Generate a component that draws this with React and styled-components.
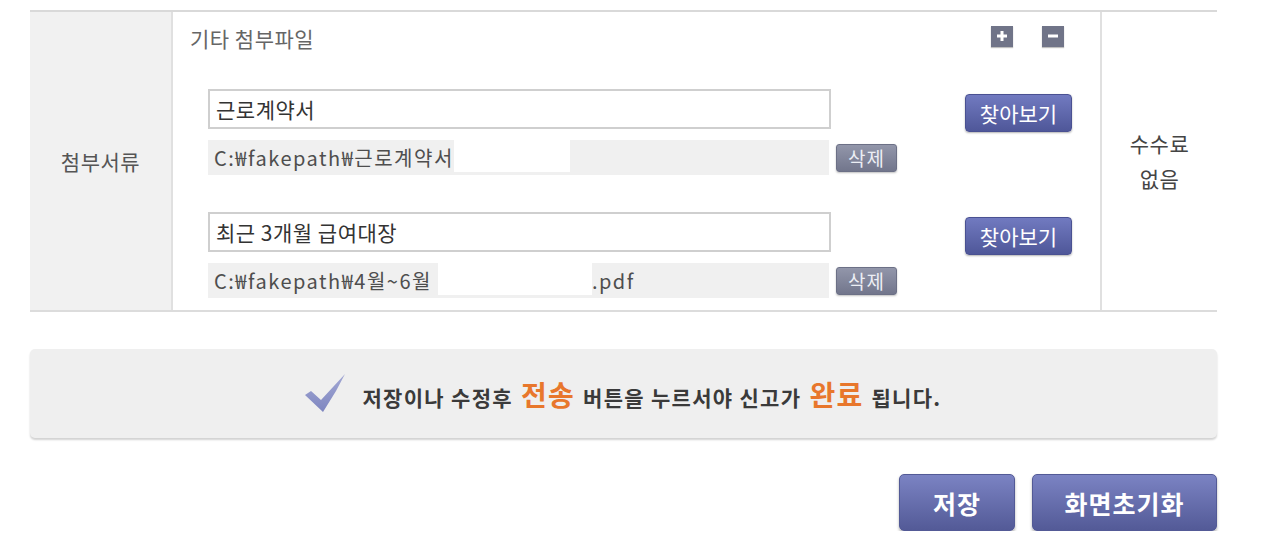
import React from "react";
import styled, { createGlobalStyle } from "styled-components";

const GlobalStyle = createGlobalStyle`
  body {
    margin: 0;
    background: #fff;
    font-family: "Noto Sans CJK KR", "Noto Sans", sans-serif;
    color: #444;
  }
`;

const Page = styled.div`
  width: 1187px;
  margin: 10px 0 0 30px;
`;

const Table = styled.div`
  display: grid;
  grid-template-columns: 143px 1fr 117px;
  border-top: 2px solid #d9d9d9;
  border-bottom: 2px solid #dcdcdc;
`;

const LabelCell = styled.div`
  display: flex;
  align-items: center;
  justify-content: center;
  background: #f1f1f1;
  border-right: 2px solid #e0e0e0;
  font-size: 21px;
  letter-spacing: 0.5px;
  color: #555;
`;

const BodyCell = styled.div`
  padding: 0 28px 12px 35px;
`;

const FeeCell = styled.div`
  display: flex;
  flex-direction: column;
  align-items: center;
  justify-content: center;
  border-left: 2px solid #e0e0e0;
  font-size: 21px;
  letter-spacing: 0.5px;
  line-height: 35px;
  color: #444;
`;

const Header = styled.div`
  display: flex;
  align-items: center;
  height: 52px;
  margin: 0 8px 25px -18px;
`;

const Title = styled.span`
  flex: 1;
  font-size: 21px;
  letter-spacing: 0.5px;
  color: #666;
`;

const SquareButton = styled.button`
  width: 22px;
  height: 21px;
  padding: 0;
  margin-left: ${(p) => (p.$first ? "0" : "29px")};
  margin-top: -4px;
  border: none;
  background: #707488;
  display: flex;
  align-items: center;
  justify-content: center;
  box-shadow: 0 1px 1px rgba(0, 0, 0, 0.25);
  cursor: pointer;
`;

const Groups = styled.div`
  display: flex;
  flex-direction: column;
  gap: 37px;
`;

const Group = styled.div`
  display: flex;
  align-items: flex-start;
`;

const Fields = styled.div`
  display: flex;
  flex-direction: column;
  gap: 11px;
`;

const NameInput = styled.div`
  box-sizing: border-box;
  width: 623px;
  height: 40px;
  border: 2px solid #cfcfcf;
  padding: 0 6px;
  display: flex;
  align-items: center;
  font-size: 21px;
  letter-spacing: 0.5px;
  color: #333;
  background: #fff;
`;

const PathRow = styled.div`
  display: flex;
  align-items: center;
`;

const PathBox = styled.div`
  box-sizing: border-box;
  width: 621px;
  height: 35px;
  background: #f0f0f0;
  padding: 0 0 0 6px;
  display: flex;
  align-items: center;
  font-size: 20px;
  letter-spacing: 1.5px;
  color: #4e4e4e;
  white-space: pre;
  overflow: hidden;
`;

const Masked = styled.span`
  display: inline-block;
  flex: none;
  align-self: flex-start;
  width: ${(p) => p.$w}px;
  height: 32px;
  background: #fff;
`;

const DeleteButton = styled.button`
  width: 61px;
  height: 28px;
  margin-left: 7px;
  border: 1px solid #6c7086;
  border-radius: 3px;
  background: linear-gradient(#9296aa, #72768c);
  color: #eceef4;
  font-family: inherit;
  font-size: 19px;
  letter-spacing: 1px;
  line-height: 1;
  padding: 0;
  box-shadow: 0 1px 2px rgba(0, 0, 0, 0.25);
  cursor: pointer;
`;

const BrowseButton = styled.button`
  width: 107px;
  height: 38px;
  margin: 5px 0 0 auto;
  border: 1px solid #4a5192;
  border-radius: 4px;
  background: linear-gradient(#717ac0, #4f5799);
  color: #fff;
  font-family: inherit;
  font-size: 21px;
  line-height: 1;
  padding: 0;
  box-shadow: 0 1px 2px rgba(0, 0, 0, 0.3);
  cursor: pointer;
`;

const Notice = styled.div`
  margin-top: 37px;
  height: 89px;
  background: #efefef;
  border-radius: 5px;
  box-shadow: 0 2px 2px #d2d2d2;
  display: flex;
  align-items: center;
  justify-content: center;
  gap: 16px;
`;

const NoticeText = styled.span`
  font-size: 21px;
  font-weight: 700;
  color: #3a3a3a;
  letter-spacing: 1.3px;
  display: flex;
  align-items: baseline;
  gap: 8px;
`;

const Accent = styled.em`
  font-style: normal;
  font-size: 28px;
  color: #e8772c;
`;

const Actions = styled.div`
  display: flex;
  justify-content: flex-end;
  gap: 17px;
  margin-top: 36px;
`;

const ActionButton = styled.button`
  width: ${(p) => p.$w}px;
  height: 57px;
  border: 1px solid #535a96;
  border-radius: 5px;
  background: linear-gradient(#7b83c3, #535a97);
  color: #fff;
  font-family: inherit;
  font-size: 25px;
  font-weight: 700;
  letter-spacing: 1px;
  padding: 0;
  box-shadow: 0 2px 3px rgba(0, 0, 0, 0.3);
  cursor: pointer;
`;

const PlusIcon = () => (
  <svg width="12" height="12" viewBox="0 0 12 12">
    <rect x="4.5" y="1" width="3" height="10" fill="#fff" />
    <rect x="1" y="4.5" width="10" height="3" fill="#fff" />
  </svg>
);

const MinusIcon = () => (
  <svg width="12" height="12" viewBox="0 0 12 12">
    <rect x="1" y="4.5" width="10" height="3" fill="#fff" />
  </svg>
);

const CheckIcon = () => (
  <svg width="41" height="39" viewBox="0 0 41 39">
    <defs>
      <linearGradient id="chk" x1="0" y1="0" x2="0" y2="1">
        <stop offset="0" stopColor="#a3a8d4" />
        <stop offset="1" stopColor="#7e86c0" />
      </linearGradient>
    </defs>
    <polygon points="0,21 6,17 16,26 40,0 31,17 18,38" fill="url(#chk)" />
  </svg>
);

const files = [
  { name: "근로계약서", pre: "C:₩fakepath₩근로계약서", mask: 116, post: "" },
  { name: "최근 3개월 급여대장", pre: "C:₩fakepath₩4월~6월 ", mask: 154, post: ".pdf" },
];

export default function App() {
  return (
    <Page>
      <GlobalStyle />
      <Table>
        <LabelCell>첨부서류</LabelCell>
        <BodyCell>
          <Header>
            <Title>기타 첨부파일</Title>
            <SquareButton $first aria-label="추가">
              <PlusIcon />
            </SquareButton>
            <SquareButton aria-label="삭제">
              <MinusIcon />
            </SquareButton>
          </Header>
          <Groups>
            {files.map((f) => (
              <Group key={f.name}>
                <Fields>
                  <NameInput>{f.name}</NameInput>
                  <PathRow>
                    <PathBox>
                      {f.pre}
                      <Masked $w={f.mask} />
                      {f.post}
                    </PathBox>
                    <DeleteButton>삭제</DeleteButton>
                  </PathRow>
                </Fields>
                <BrowseButton>찾아보기</BrowseButton>
              </Group>
            ))}
          </Groups>
        </BodyCell>
        <FeeCell>
          <span>수수료</span>
          <span>없음</span>
        </FeeCell>
      </Table>
      <Notice>
        <CheckIcon />
        <NoticeText>
          <span>저장이나 수정후</span>
          <Accent>전송</Accent>
          <span>버튼을 누르서야 신고가</span>
          <Accent>완료</Accent>
          <span>됩니다.</span>
        </NoticeText>
      </Notice>
      <Actions>
        <ActionButton $w={116}>저장</ActionButton>
        <ActionButton $w={185}>화면초기화</ActionButton>
      </Actions>
    </Page>
  );
}
